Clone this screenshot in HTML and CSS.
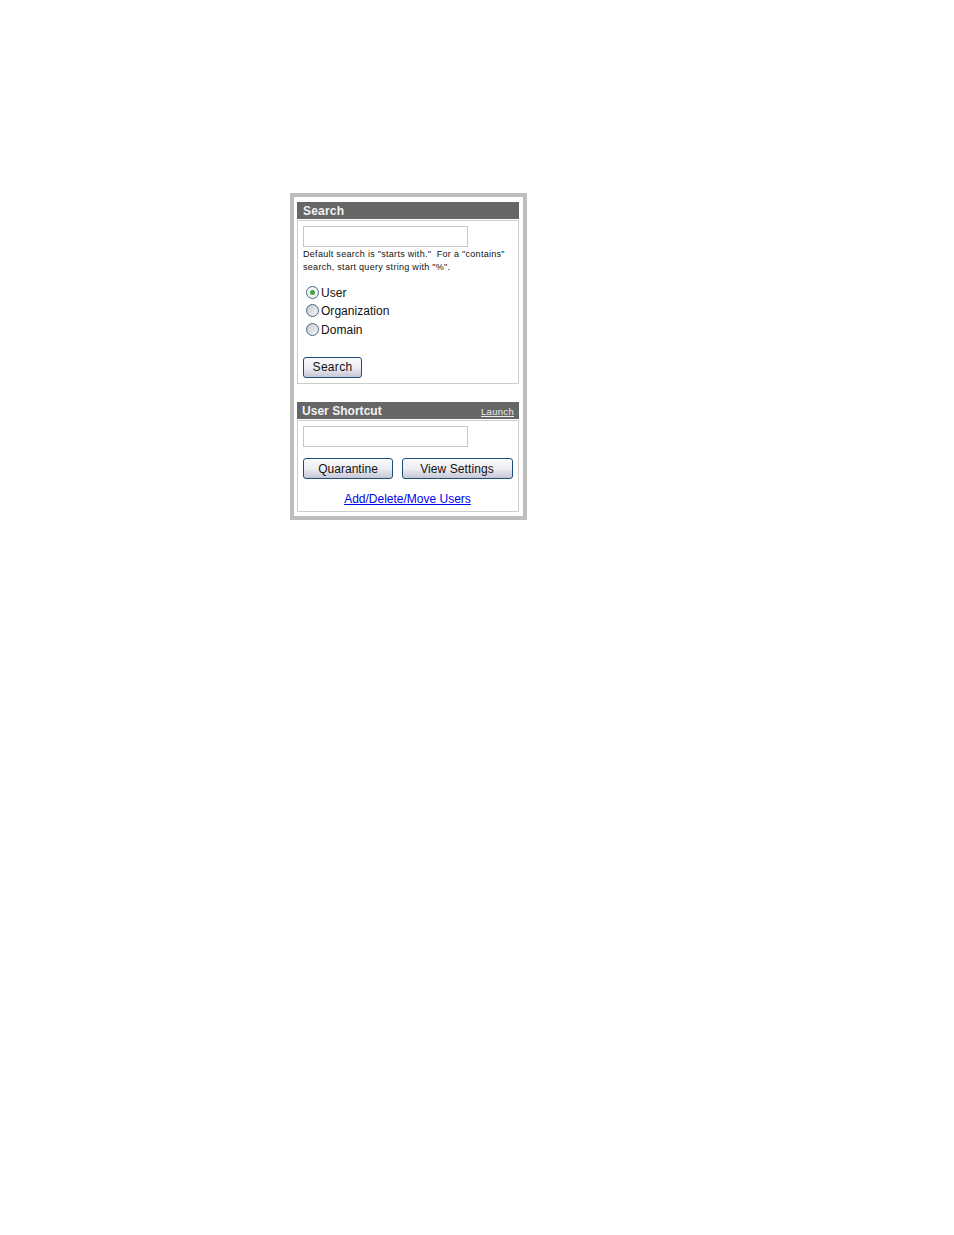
FILE: index.html
```html
<!DOCTYPE html>
<html lang="en">
<head>
<meta charset="utf-8">
<title>Search</title>
<link rel="stylesheet" href="styles.css">
</head>
<body>
<div class="frame">
  <section class="panel panel-search">
    <header class="bar"><span class="bar-title title-search">Search</span></header>
    <div class="body body-search">
      <div class="field"></div>
      <p class="hint">Default search is "starts with."&nbsp; For a "contains"<br>search, start query string with "%".</p>
      <ul class="radios">
        <li class="radio-row"><span class="radio radio-on"><span class="dot"></span></span><span class="radio-label">User</span></li>
        <li class="radio-row"><span class="radio"></span><span class="radio-label">Organization</span></li>
        <li class="radio-row"><span class="radio"></span><span class="radio-label">Domain</span></li>
      </ul>
      <span class="btn btn-search">Search</span>
    </div>
  </section>
  <section class="panel">
    <header class="bar"><span class="bar-title">User Shortcut</span><a class="launch" href="#">Launch</a></header>
    <div class="body body-user">
      <div class="field"></div>
      <div class="btn-row">
        <span class="btn btn-quarantine">Quarantine</span>
        <span class="btn btn-settings">View Settings</span>
      </div>
      <a class="add-link" href="#">Add/Delete/Move Users</a>
    </div>
  </section>
</div>
</body>
</html>
```
FILE: styles.css
```css
html, body { margin: 0; padding: 0; background: #fff; }
body {
  width: 954px;
  height: 1235px;
  overflow: hidden;
  padding: 193px 0 0 290px;
  box-sizing: border-box;
  font-family: "Liberation Sans", Arial, sans-serif;
  color: #111;
}
.frame {
  width: 237px;
  height: 327px;
  box-sizing: border-box;
  border: 4px solid #bdbdbd;
  padding: 5px 4px 0 3px;
}
.panel-search { margin-bottom: 18px; }
.bar {
  height: 17px;
  background: #666;
  display: flex;
  align-items: center;
  justify-content: space-between;
  padding: 0 5px;
  color: #f2f2f2;
}
.bar-title { font-size: 12px; font-weight: bold; letter-spacing: 0.03px; }
.title-search { letter-spacing: 0.2px; margin-left: 1px; }
.launch { font-size: 9.5px; letter-spacing: 0.3px; color: #eee; text-decoration: underline; position: relative; top: 1px; }
.body {
  margin-top: 1px;
  border: 1px solid #ccc;
  padding: 5px 5px 0 5px;
  box-sizing: border-box;
}
.body-search { height: 164px; }
.body-user { height: 92px; }
.field {
  width: 165px;
  height: 21px;
  box-sizing: border-box;
  border: 1px solid #c4c8cc;
  background: #fff;
}
.hint {
  margin: 1px 0 0;
  font-size: 9px;
  line-height: 13px;
  letter-spacing: 0.29px;
  color: #111;
}
.radios { list-style: none; margin: 9px 0 0; padding: 0 0 0 3px; }
.radio-row {
  display: flex;
  align-items: center;
  gap: 2px;
  height: 18.5px;
  font-size: 12px;
  letter-spacing: 0.03px;
}
.radio-label { padding-top: 1px; }
.radio {
  width: 13px;
  height: 13px;
  box-sizing: border-box;
  border: 1px solid #3f6a8f;
  border-radius: 50%;
  background: linear-gradient(135deg, #c9c9c9, #f6f6f6);
  display: flex;
  align-items: center;
  justify-content: center;
}
.radio-on { background: #f4f4f4; }
.dot { width: 5px; height: 5px; border-radius: 50%; background: #3fa34a; }
.btn {
  display: flex;
  align-items: center;
  justify-content: center;
  height: 21px;
  box-sizing: border-box;
  border: 1px solid #1c4f7c;
  border-radius: 3px;
  background: linear-gradient(#fafafa 0%, #eeeef4 50%, #c6c6d6 100%);
  font-size: 12px;
  color: #111;
}
.btn-search { width: 59px; margin-top: 18px; letter-spacing: 0.3px; padding-bottom: 1px; }
.btn-row { display: flex; gap: 9px; margin-top: 11px; }
.btn-quarantine { width: 90px; letter-spacing: 0.03px; }
.btn-settings { width: 111px; padding-right: 1px; letter-spacing: 0.08px; }
.add-link {
  display: block;
  margin-top: 13px;
  padding-right: 1px;
  text-align: center;
  font-size: 12px;
  line-height: 15px;
  color: #0000ee;
  text-decoration: underline;
}
```
